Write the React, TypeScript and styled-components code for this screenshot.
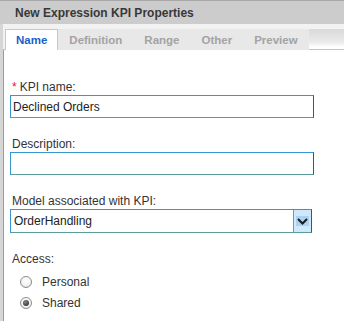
import React from "react";
import styled, { createGlobalStyle } from "styled-components";

const GlobalStyle = createGlobalStyle`
  html, body {
    margin: 0;
    padding: 0;
    background: #ffffff;
  }
  body {
    font-family: "Liberation Sans", Arial, sans-serif;
  }
`;

const Panel = styled.div`
  width: 344px;
  height: 321px;
  display: flex;
  flex-direction: column;
  overflow: hidden;
  background: #ffffff;
`;

const TitleBar = styled.div`
  flex-shrink: 0;
  height: 23px;
  border-top: 1px solid #a8a8a8;
  background: #cccccc;
  display: flex;
  align-items: center;
  padding-left: 15px;
  font-size: 12px;
  font-weight: bold;
  color: #383838;
`;

const Body = styled.div`
  flex: 1 0 auto;
  display: flex;
  flex-direction: column;
  border-left: 3px solid #d6d6d6;
  box-shadow: inset 1px 0 0 #9c9c9c;
`;

const TabBar = styled.div`
  flex-shrink: 0;
  display: flex;
  align-items: flex-end;
  padding-top: 5px;
  padding-left: 2px;
  background: #f2f2f2;
  border-bottom: 1px solid #c4c4c4;
`;

const Tab = styled.div<{ $active?: boolean }>`
  height: 21px;
  box-sizing: border-box;
  display: flex;
  align-items: center;
  padding: 0 10px;
  font-size: 11.5px;
  font-weight: bold;
  color: ${(p) => (p.$active ? "#1c5fc9" : "#a3a3a3")};
  background: ${(p) => (p.$active ? "#ffffff" : "#e8e8e8")};
  border: 1px solid ${(p) => (p.$active ? "#c8c8c8" : "#e8e8e8")};
  border-bottom: none;
  margin-bottom: -1px;
  padding-bottom: ${(p) => (p.$active ? "1px" : "0")};
`;

const TabFiller = styled.div`
  flex: 1;
  align-self: stretch;
  margin-top: -5px;
  background: linear-gradient(
    to bottom,
    #f2f2f2 0px,
    #f2f2f2 5px,
    #dadada 5px,
    #e2e2e2 12px,
    #eaeaea 18px,
    #f6f6f6 21px,
    #ffffff 23px
  );
`;

const Form = styled.div`
  display: flex;
  flex-direction: column;
  flex-shrink: 0;
  padding: 30px 0 0 7px;
`;

const Field = styled.div`
  display: flex;
  flex-direction: column;
  flex-shrink: 0;
  margin-bottom: 19px;
`;

const Label = styled.div`
  font-size: 12px;
  line-height: 15px;
  color: #333333;
  padding-left: 2px;
`;

const Required = styled.span`
  color: #e0201b;
  margin-right: 3px;
`;

const TextInput = styled.div`
  flex-shrink: 0;
  width: 304px;
  height: 23px;
  box-sizing: border-box;
  border: 1px solid #3596d0;
  border-right-color: #1e5f8f;
  border-bottom-color: #5a9c9a;
  display: flex;
  align-items: center;
  padding-left: 2px;
  font-size: 12px;
  color: #222222;
`;

const Select = styled.div`
  flex-shrink: 0;
  width: 302px;
  height: 24px;
  box-sizing: border-box;
  border: 1px solid #3596d0;
  border-right-color: #1e5f8f;
  border-bottom-color: #5a9c9a;
  display: flex;
  font-size: 12px;
  color: #222222;
`;

const SelectValue = styled.div`
  flex: 1;
  display: flex;
  align-items: center;
  padding-left: 3px;
`;

const SelectButton = styled.div`
  width: 17px;
  border-left: 1px solid #8f8f8f;
  background: #cfe8fb;
  display: flex;
  align-items: center;
  justify-content: center;
`;

const ArrowBox = styled.div`
  width: 13px;
  height: 10px;
  background: #a9d2f4;
  display: flex;
  align-items: center;
  justify-content: center;
`;

const RadioGroup = styled.div`
  display: flex;
  flex-direction: column;
  padding-top: 4px;
`;

const RadioRow = styled.div`
  display: flex;
  align-items: center;
  height: 21px;
  padding-left: 10px;
  font-size: 12px;
  color: #333333;
`;

const RadioCircle = styled.div<{ $checked?: boolean }>`
  width: 12px;
  height: 12px;
  box-sizing: border-box;
  border-radius: 50%;
  border: 1px solid #8c8c8c;
  background: radial-gradient(circle at 50% 35%, #ffffff 0%, #f4f4f4 55%, #d8d8d8 100%);
  display: flex;
  align-items: center;
  justify-content: center;
  margin-right: 10px;
  &::after {
    content: "";
    display: ${(p) => (p.$checked ? "block" : "none")};
    width: 6px;
    height: 6px;
    border-radius: 50%;
    background: radial-gradient(circle at 40% 35%, #888888 0%, #3a3a3a 70%, #222222 100%);
  }
`;

const tabs = ["Name", "Definition", "Range", "Other", "Preview"];

export default function App() {
  return (
    <>
      <GlobalStyle />
      <Panel>
        <TitleBar>New Expression KPI Properties</TitleBar>
        <Body>
          <TabBar>
            {tabs.map((t) => (
              <Tab key={t} $active={t === "Name"}>
                {t}
              </Tab>
            ))}
            <TabFiller />
          </TabBar>
          <Form>
            <Field>
              <Label>
                <Required>*</Required>KPI name:
              </Label>
              <TextInput>Declined Orders</TextInput>
            </Field>
            <Field>
              <Label>Description:</Label>
              <TextInput />
            </Field>
            <Field>
              <Label>Model associated with KPI:</Label>
              <Select>
                <SelectValue>OrderHandling</SelectValue>
                <SelectButton>
                  <ArrowBox>
                    <svg width="11" height="7" viewBox="0 0 11 7">
                      <path
                        d="M1 1 L5.5 5.5 L10 1"
                        fill="none"
                        stroke="#1a1a1a"
                        strokeWidth="2"
                      />
                    </svg>
                  </ArrowBox>
                </SelectButton>
              </Select>
            </Field>
            <Field>
              <Label>Access:</Label>
              <RadioGroup>
                <RadioRow>
                  <RadioCircle />
                  Personal
                </RadioRow>
                <RadioRow>
                  <RadioCircle $checked />
                  Shared
                </RadioRow>
              </RadioGroup>
            </Field>
          </Form>
        </Body>
      </Panel>
    </>
  );
}
